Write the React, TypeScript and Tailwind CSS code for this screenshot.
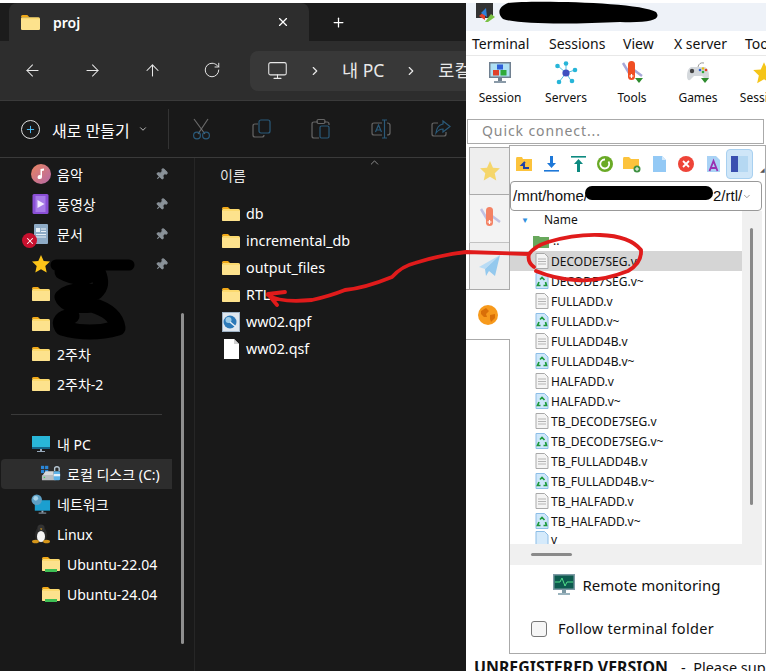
import React from 'react';
import { ArrowLeft, ArrowRight, ArrowUp, ChevronDown, ChevronRight, ChevronUp, Monitor, Pin, Plus, RotateCw, X } from 'lucide-react';

const Folder = ({ green = false, size = 18 }: { green?: boolean; size?: number }) => (
  <svg width={size} height={size} viewBox="0 0 18 18" className="shrink-0">
    <path d="M0 3.5 Q0 2 1.5 2 H6 L8 4 H0 Z" fill="#f0a818" />
    <path d="M0 5 Q0 3.8 1.5 4 L7 4 L8.5 4 H16.5 Q18 4 18 5.5 V15 Q18 16 16.5 16 H1.5 Q0 16 0 15 Z" fill="#fbd96e" />
    <path d="M0 6 H18 V15 Q18 16 16.5 16 H1.5 Q0 16 0 15 Z" fill="#fde28d" />
    {green && <rect x="3" y="14" width="12" height="3" fill="#3fbf55" />}
  </svg>
);

const Scissors = () => (
  <svg width="20" height="22" viewBox="0 0 20 22" fill="none" strokeWidth="1.2">
    <path d="M2 1 L13 16 M16 1 L6 16" stroke="#6a6a6a" />
    <circle cx="5" cy="17.5" r="3.4" stroke="#2a5a7a" />
    <circle cx="14" cy="17.5" r="3.4" stroke="#2a5a7a" />
  </svg>
);

const CopyIcon = () => (
  <svg width="20" height="20" viewBox="0 0 20 20" fill="none" strokeWidth="1.2">
    <path d="M6 5 H3 Q1 5 1 7 V16 Q1 18 3 18 H10 Q12 18 12 16" stroke="#666" />
    <rect x="7" y="1" width="11" height="13" rx="2" stroke="#2a5a7a" />
  </svg>
);

const PasteIcon = () => (
  <svg width="20" height="22" viewBox="0 0 20 22" fill="none" strokeWidth="1.2">
    <path d="M7 4 H3 Q1 4 1 6 V18 Q1 20 3 20 H8 M13 4 H16 Q18 4 18 6 V7" stroke="#666" />
    <rect x="6" y="1.5" width="8" height="4" rx="1.5" stroke="#666" />
    <rect x="9" y="8" width="9" height="12" rx="1.5" stroke="#2a5a7a" />
  </svg>
);

const RenameIcon = () => (
  <svg width="20" height="20" viewBox="0 0 20 20" fill="none" strokeWidth="1.2">
    <path d="M11 4 H3 Q1 4 1 6 V14 Q1 16 3 16 H11 M16 4 Q19 4 19 6 V14 Q19 16 16 16" stroke="#666" />
    <path d="M11 1 H16 M13.5 1 V19 M11 19 H16 M4.5 13 L7.5 6 L10.5 13 M5.5 11 H9.5" stroke="#2a5a7a" />
  </svg>
);

const ShareIcon = () => (
  <svg width="20" height="20" viewBox="0 0 20 20" fill="none" strokeWidth="1.2">
    <path d="M7 4 H3 Q1 4 1 6 V15 Q1 17 3 17 H13 Q15 17 15 15 V13" stroke="#666" />
    <path d="M12 2 L19 7.5 L12 13 V10 Q8 10 5 14 Q6 6 12 5 Z" stroke="#2a5a7a" />
  </svg>
);

const PinIcon = () => (
  <Pin size={13} className="rotate-45 text-[#8a9299] fill-[#8a9299] shrink-0" />
);

const Music = () => (
  <svg width="20" height="20" viewBox="0 0 20 20">
    <defs>
      <linearGradient id="mus" x1="0" y1="0" x2="1" y2="1">
        <stop offset="0" stopColor="#ea8560" />
        <stop offset="1" stopColor="#b469a8" />
      </linearGradient>
    </defs>
    <circle cx="10" cy="10" r="10" fill="url(#mus)" />
    <path d="M9.5 5 L13 4.5 V6.5 L11 7 V13 A2.2 2 0 1 1 9.5 11.2 Z" fill="#fff" />
  </svg>
);

const Video = () => (
  <svg width="20" height="20" viewBox="0 0 20 20">
    <rect x="1.5" y="0" width="16" height="20" rx="1.5" fill="#8a4fd6" />
    <rect x="4.5" y="2" width="10" height="16" fill="#a77ae8" />
    <path d="M6.5 6 L13.5 10 L6.5 14 Z" fill="#f2eaff" />
  </svg>
);

const Doc = () => (
  <svg width="20" height="20" viewBox="0 0 20 20">
    <rect x="3" y="0" width="14" height="20" rx="1" fill="#8eabc6" />
    <rect x="5" y="4" width="4" height="4" fill="#e8f0f7" />
    <path d="M10 5 H15 M10 7.5 H15 M5 10.5 H15 M5 13 H15" stroke="#e8f0f7" strokeWidth="1" />
  </svg>
);

const Star = ({ size = 20, color = '#fcc419' }: { size?: number; color?: string }) => (
  <svg width={size} height={size} viewBox="0 0 20 20">
    <path d="M10 1 L12.7 7 L19 7.6 L14.3 12 L15.7 18.6 L10 15.2 L4.3 18.6 L5.7 12 L1 7.6 L7.3 7 Z" fill={color} />
  </svg>
);

const Pc = () => (
  <svg width="20" height="20" viewBox="0 0 20 20">
    <rect x="1" y="2" width="18" height="13" fill="#29b6d8" />
    <rect x="1" y="13" width="18" height="2" fill="#15658a" />
    <rect x="9" y="15" width="2" height="2" fill="#9ab" />
    <rect x="6" y="17" width="8" height="1" fill="#9ab" />
  </svg>
);

const LocalDisk = () => (
  <svg width="22" height="18" viewBox="0 0 22 18">
    <rect x="0" y="0" width="3.5" height="3.5" fill="#2a86d8" />
    <rect x="4.5" y="0" width="3.5" height="3.5" fill="#2a86d8" />
    <rect x="0" y="4.5" width="3.5" height="3.5" fill="#2a86d8" />
    <rect x="4.5" y="4.5" width="3.5" height="3.5" fill="#2a86d8" />
    <path d="M2 10 L5 6 H14 V10 Z" fill="#d5d8da" />
    <rect x="1" y="10" width="15" height="6" rx="1" fill="#b8bcbf" />
    <rect x="3" y="12" width="1.5" height="1.5" fill="#4ccf60" />
    <path d="M15 6 V3 Q15 1 17.5 1 Q20 1 20 3 V6" stroke="#b8c8d4" strokeWidth="1.5" fill="none" />
    <rect x="14" y="6" width="7" height="10" rx="1.5" fill="#5db2e8" />
    <rect x="14" y="9" width="7" height="2.5" fill="#e3f1fb" />
  </svg>
);

const Network = () => (
  <svg width="21" height="21" viewBox="0 0 21 21">
    <rect x="4" y="6" width="16" height="11" fill="#1b9fd0" />
    <rect x="11" y="17" width="2" height="2" fill="#9ab" />
    <rect x="8" y="19" width="8" height="1" fill="#9ab" />
    <circle cx="6" cy="5.5" r="5.5" fill="#5d9fc4" />
    <circle cx="5" cy="4" r="2.5" fill="#a8d4ea" />
  </svg>
);

const Tux = () => (
  <svg width="18" height="20" viewBox="0 0 18 20">
    <ellipse cx="9" cy="11" rx="6" ry="8" fill="#2a2a2a" />
    <circle cx="9" cy="4" r="3.6" fill="#333" />
    <ellipse cx="9" cy="12.5" rx="4" ry="5.5" fill="#f5f5f5" />
    <path d="M8 4.6 H10.4 L9.2 6 Z" fill="#eaa81b" />
    <ellipse cx="3.5" cy="17.5" rx="3.5" ry="1.8" fill="#d4951a" />
    <ellipse cx="14.5" cy="17.5" rx="3.5" ry="1.8" fill="#d4951a" />
  </svg>
);

const QpfIcon = () => (
  <svg width="18" height="20" viewBox="0 0 18 20">
    <rect x="0.5" y="0.5" width="17" height="19" fill="#dfe7ef" stroke="#9fb3c6" />
    <circle cx="8" cy="10" r="6.5" fill="#2c79b8" />
    <circle cx="6.5" cy="8" r="3" fill="#9ccbe8" />
    <path d="M8 10 L14 15" stroke="#e8f0f8" strokeWidth="1.5" />
  </svg>
);

const QsfIcon = () => (
  <svg width="16" height="20" viewBox="0 0 16 20">
    <path d="M1 0 H11 L16 5 V20 H1 Z" fill="#fff" />
    <path d="M11 0 V5 H16 Z" fill="#d0d0d0" />
  </svg>
);

const SessionIcon = () => (
  <svg width="24" height="24" viewBox="0 0 24 24">
    <rect x="1" y="1" width="22" height="16" fill="#708090" />
    <rect x="2.5" y="2.5" width="19" height="13" fill="#aee0f4" />
    <rect x="9" y="3.5" width="6" height="5" fill="#2f5fd8" />
    <rect x="5" y="9" width="6" height="5.5" fill="#e0402a" />
    <rect x="12.5" y="9" width="6" height="5.5" fill="#2faa3a" />
    <rect x="10" y="17" width="4" height="3" fill="#708090" />
    <rect x="6" y="20" width="12" height="2" fill="#8a9aa8" />
  </svg>
);

const ServersIcon = () => (
  <svg width="24" height="24" viewBox="0 0 24 24" fill="#27b5d8">
    <path d="M12 12 L3 4 M12 12 L12 2 M12 12 L21 9 M12 12 L18 21 M12 12 L5 21" stroke="#27b5d8" strokeWidth="0.8" />
    <circle cx="3.5" cy="5" r="2.3" />
    <circle cx="12" cy="2.5" r="2.3" />
    <circle cx="21" cy="9" r="2.3" />
    <circle cx="18" cy="20" r="2.3" />
    <circle cx="5" cy="21" r="2.3" />
    <circle cx="12" cy="12" r="3.6" fill="#4050c0" />
  </svg>
);

const KnifeIcon = ({ arrow = true }: { arrow?: boolean }) => (
  <svg width="24" height="24" viewBox="0 0 24 24">
    <path d="M3 2 L12 17 M22 15 L14 9" stroke="#a8a8d8" strokeWidth="2.5" />
    <rect x="8" y="0" width="7" height="19" rx="3.5" fill="#f04e23" />
    <path d="M11.5 13 V17 M9.5 15 H13.5" stroke="#fff" strokeWidth="1.2" />
    {arrow && <path d="M15 17 H23 L19 22 Z" fill="#2e8b2e" />}
  </svg>
);

const GamesIcon = () => (
  <svg width="24" height="24" viewBox="0 0 24 24">
    <path d="M12 6 Q13 1 18 2" stroke="#999" fill="none" />
    <path d="M5 6 H19 Q23 8 23 15 Q23 20 20 19 L16 15 H8 L4 19 Q1 20 1 15 Q1 8 5 6 Z" fill="#d4d8dc" />
    <circle cx="6" cy="10" r="2.2" fill="#444" />
    <circle cx="14" cy="9" r="1.3" fill="#2f5fd8" />
    <circle cx="17" cy="7.5" r="1.3" fill="#e8c010" />
    <circle cx="17" cy="11" r="1.3" fill="#2faa3a" />
    <circle cx="20" cy="9" r="1.3" fill="#e0402a" />
    <path d="M15 17 H23 L19 22 Z" fill="#2e8b2e" />
  </svg>
);

const Plane = () => (
  <svg width="22" height="22" viewBox="0 0 22 22">
    <path d="M21 0 L0 12 L6 14 Z" fill="#b9dcf5" />
    <path d="M21 0 L6 14 L7 21 L10 16 L16 21 Z" fill="#94c9ee" />
  </svg>
);

const Globe = () => (
  <svg width="20" height="20" viewBox="0 0 20 20">
    <circle cx="10" cy="10" r="10" fill="#f79a1c" />
    <path d="M3 6 L8 3 L11 6 L8 9 L9 12 L6 12 L3 9 Z M12 10 L17 9 L17 13 L13 17 L12 14 Z" fill="#d96f08" />
  </svg>
);

const SmallIcon = ({ children }: { children: React.ReactNode }) => (
  <svg width="18" height="18" viewBox="0 0 18 18" className="shrink-0">{children}</svg>
);

const sftpTools = [
  <SmallIcon key="a"><path d="M1 4 Q1 2 2 2 H7 L8 4 H17 V16 H1 Z" fill="#fcc33c" /><path d="M10 7 L7 10 H9 V13 H14" stroke="#1e3fa8" strokeWidth="2" fill="none" /></SmallIcon>,
  <SmallIcon key="b"><path d="M8 1 H11 V8 H14 L9.5 13 L5 8 H8 Z" fill="#1e78d8" /><rect x="2" y="15" width="15" height="1.6" fill="#1e78d8" /></SmallIcon>,
  <SmallIcon key="c"><rect x="2" y="1" width="15" height="1.6" fill="#0d8a80" /><path d="M9.5 4 L14 9 H11 V17 H8 V9 H5 Z" fill="#0d8a80" /></SmallIcon>,
  <SmallIcon key="d"><circle cx="9" cy="9" r="8" fill="#6aaa26" /><path d="M12.5 6.5 A4.5 4.5 0 1 1 9 4.5" stroke="#fff" strokeWidth="1.8" fill="none" /></SmallIcon>,
  <SmallIcon key="e"><path d="M0 4 Q0 2 1 2 H6 L8 4 H16 V14 H0 Z" fill="#fcc33c" /><circle cx="14" cy="14" r="3.5" fill="#3f9142" /><path d="M14 12 V16 M12 14 H16" stroke="#fff" /></SmallIcon>,
  <SmallIcon key="f"><path d="M3 1 H12 L16 5 V17 H3 Z" fill="#93c9f5" /><path d="M12 1 V5 H16 Z" fill="#d5eafb" /></SmallIcon>,
  <SmallIcon key="g"><circle cx="9" cy="9" r="8" fill="#ee4438" /><path d="M6 6 L12 12 M12 6 L6 12" stroke="#fff" strokeWidth="1.8" /></SmallIcon>,
  <SmallIcon key="h"><path d="M3 1 H12 L16 5 V17 H3 Z" fill="#a9d2f5" /><path d="M5.5 16 L9.5 6 L13.5 16 M7 13 H12" stroke="#9a2fb0" strokeWidth="1.8" fill="none" /></SmallIcon>,
];

const NavRow = ({ icon, label, pinned, sub }: { icon: React.ReactNode; label?: string; pinned?: boolean; sub?: boolean }) => (
  <div className={`relative flex h-[30px] items-center ${sub ? 'pl-[41px]' : 'pl-[31px]'}`}>
    <span className="flex w-5 justify-center">{icon}</span>
    <span className="ml-[6px] whitespace-nowrap text-[14px] text-white">{label}</span>
    {pinned && <span className="absolute left-[155px]"><PinIcon /></span>}
  </div>
);

const FileRow = ({ icon, label }: { icon: React.ReactNode; label: string }) => (
  <div className="flex h-[27px] items-center pl-[27px]">
    <span className="flex w-[18px] justify-center">{icon}</span>
    <span className="ml-[6px] text-[14.3px] text-white">{label}</span>
  </div>
);

const TextFile = () => (
  <svg width="14" height="16" viewBox="0 0 14 16" className="shrink-0">
    <path d="M1 .5 H9.5 L13 4 V15.5 H1 Z" fill="#f4f4f4" stroke="#a9a9a9" />
    <path d="M3 6 H11 M3 8.5 H11 M3 11 H11" stroke="#b4b4b4" />
  </svg>
);

const BackupFile = () => (
  <svg width="14" height="16" viewBox="0 0 14 16" className="shrink-0">
    <path d="M1 .5 H9.5 L13 4 V15.5 H1 Z" fill="#cfe7fb" stroke="#8cbde6" />
    <path d="M5 6.5 L7 4.5 L9.5 7 M10.5 9 L11.5 12.5 H8.5 M5.5 12.5 H2.5 L4 9" stroke="#1f9a3d" strokeWidth="1.7" fill="none" />
  </svg>
);

const remoteFiles: [string, boolean][] = [
  ['DECODE7SEG.v', false],
  ['DECODE7SEG.v~', true],
  ['FULLADD.v', false],
  ['FULLADD.v~', true],
  ['FULLADD4B.v', false],
  ['FULLADD4B.v~', true],
  ['HALFADD.v', false],
  ['HALFADD.v~', true],
  ['TB_DECODE7SEG.v', false],
  ['TB_DECODE7SEG.v~', true],
  ['TB_FULLADD4B.v', false],
  ['TB_FULLADD4B.v~', true],
  ['TB_HALFADD.v', false],
  ['TB_HALFADD.v~', true],
];

const Explorer = () => (
  <div className="flex h-full w-[466px] shrink-0 flex-col bg-[#191919] font-['Noto_Sans','Noto_Sans_CJK_KR',sans-serif]">
    <div className="h-[3px] bg-white" />
    <div className="flex h-[38px] items-end bg-[#1c1c1c] pl-[9px]">
      <div className="flex h-[38px] w-[300px] items-center rounded-t-lg bg-[#2d2d2d] pl-3 pr-[19px]">
        <Folder size={19} />
        <span className="ml-[13px] text-[14px] font-semibold text-white">proj</span>
        <X size={14} className="ml-auto text-white" />
      </div>
      <Plus size={15} className="mb-[11px] ml-[22px] text-white" />
    </div>
    <div className="flex h-[60px] items-center border-b border-[#3a3a3a] bg-[#2d2d2d] pl-[23px]">
      <div className="flex w-[227px] text-[#e8e8e8]">
        <span className="w-[60px]"><ArrowLeft size={19} strokeWidth={1.3} /></span>
        <span className="w-[60px]"><ArrowRight size={19} strokeWidth={1.3} /></span>
        <span className="w-[60px]"><ArrowUp size={19} strokeWidth={1.3} /></span>
        <span className="w-[47px]"><RotateCw size={18} strokeWidth={1.3} /></span>
      </div>
      <div className="flex h-10 flex-1 items-center rounded-l-lg bg-[#383838] pl-[17px] text-[17.5px] text-[#e8e8e8]">
        <Monitor size={21} strokeWidth={1.2} />
        <ChevronRight size={14} strokeWidth={2} className="ml-[20px]" />
        <span className="ml-[20px] whitespace-nowrap">내 PC</span>
        <ChevronRight size={14} strokeWidth={2} className="ml-[20px]" />
        <span className="ml-[20px] whitespace-nowrap">로컬</span>
      </div>
    </div>
    <div className="flex h-[57px] items-center border-b border-[#3a3a3a] pl-[21px]">
      <span className="flex size-[19px] items-center justify-center rounded-full border border-[#e0e0e0]">
        <Plus size={11} className="text-[#4cc2ff]" />
      </span>
      <span className="ml-3 whitespace-nowrap pt-[3px] text-[16px] text-white">새로 만들기</span>
      <ChevronDown size={10} className="ml-2 text-[#d8d8d8]" />
      <span className="ml-5 h-10 w-px bg-[#333]" />
      <div className="flex items-center pl-[23px]">
        <span className="w-[60px]"><Scissors /></span>
        <span className="w-[59px]"><CopyIcon /></span>
        <span className="w-[60px]"><PasteIcon /></span>
        <span className="w-[60px]"><RenameIcon /></span>
        <span><ShareIcon /></span>
      </div>
    </div>
    <div className="flex min-h-0 flex-1">
      <div className="flex w-[195px] shrink-0 border-r border-[#262626]">
        <div className="w-[172px] shrink-0 overflow-hidden pt-px">
          <NavRow icon={<Music />} label="음악" pinned />
          <NavRow icon={<Video />} label="동영상" pinned />
          <div className="relative">
            <NavRow icon={<Doc />} label="문서" pinned />
            <span className="absolute left-[22px] top-[14px] flex size-[15px] items-center justify-center rounded-full bg-[#c8102e]">
              <X size={10} strokeWidth={2.5} className="text-white" />
            </span>
          </div>
          <NavRow icon={<Star />} pinned />
          <NavRow icon={<Folder />} />
          <NavRow icon={<Folder />} />
          <NavRow icon={<Folder />} label="2주차" />
          <NavRow icon={<Folder />} label="2주차-2" />
          <div className="flex h-[30px] items-center pl-[11px] pr-[10px]">
            <div className="h-px w-full bg-[#3a3a3a]" />
          </div>
          <NavRow icon={<Pc />} label="내 PC" />
          <div className="ml-px rounded-l bg-[#2d2d2d]">
            <div className="-ml-px">
              <NavRow sub icon={<LocalDisk />} label="로컬 디스크 (C:)" />
            </div>
          </div>
          <NavRow icon={<Network />} label="네트워크" />
          <NavRow icon={<Tux />} label="Linux" />
          <NavRow sub icon={<Folder green />} label="Ubuntu-22.04" />
          <NavRow sub icon={<Folder green />} label="Ubuntu-24.04" />
        </div>
        <div className="ml-[9px] mt-[155px] h-[331px] w-[3px] rounded bg-[#8f8f8f]" />
      </div>
      <div className="min-w-0 flex-1">
        <div className="relative flex h-[42px] items-start pl-[25px] pt-[7px] text-[14px] text-[#e6e6e6]">
          이름
          <ChevronUp size={13} strokeWidth={1.3} className="absolute left-[173px] top-[-2px] text-[#bbb]" />
        </div>
        <FileRow icon={<Folder />} label="db" />
        <FileRow icon={<Folder />} label="incremental_db" />
        <FileRow icon={<Folder />} label="output_files" />
        <FileRow icon={<Folder />} label="RTL" />
        <FileRow icon={<QpfIcon />} label="ww02.qpf" />
        <FileRow icon={<QsfIcon />} label="ww02.qsf" />
      </div>
    </div>
  </div>
);

const Terminal = () => (
  <div className="flex h-full min-w-0 flex-1 flex-col overflow-hidden bg-white font-['Noto_Sans',sans-serif] text-[#111]">
    <div className="flex h-[31px] shrink-0 items-start bg-white">
      <div className="mt-[3px] flex h-[28px] w-full items-start bg-[#eef2f8] pl-[10px]">
        <svg width="19" height="19" viewBox="0 0 19 19">
          <rect x="0" y="0" width="17" height="15" fill="#333" />
          <path d="M9 8 L3 13 L9 17 Z" fill="#e0402a" />
          <path d="M10 5 L5 10 L11 14 Z" fill="#2f7fd8" />
          <path d="M9 19 L15 11 L19 14 L12 19 Z" fill="#7ac143" />
        </svg>
      </div>
    </div>
    <div className="flex h-[25px] shrink-0 items-center border-b border-[#e8e8e8] pl-[6px] text-[14px]">
      <span className="w-[77px] shrink-0">Terminal</span>
      <span className="w-[74px] shrink-0">Sessions</span>
      <span className="w-[51px] shrink-0">View</span>
      <span className="w-[71px] shrink-0 whitespace-nowrap">X server</span>
      <span className="shrink-0">Tools</span>
    </div>
    <div className="flex h-[63px] shrink-0 pl-[1px] pt-[5px] text-[12px]">
      {[
        { label: 'Session', icon: <SessionIcon /> },
        { label: 'Servers', icon: <ServersIcon /> },
        { label: 'Tools', icon: <KnifeIcon /> },
        { label: 'Games', icon: <GamesIcon /> },
        { label: 'Sessions', icon: <Star size={24} color="#f5c518" /> },
      ].map((t) => (
        <div key={t.label} className="flex w-[66px] shrink-0 flex-col items-center gap-[5px]">
          {t.icon}
          <span className="whitespace-nowrap leading-[16px]">{t.label}</span>
        </div>
      ))}
    </div>
    <div className="mx-[1px] mr-[2px] flex h-[25px] shrink-0 items-center border border-[#aaa] pb-[3px] pl-[14px] text-[14px] tracking-[0.9px] text-[#888]">
      Quick connect...
    </div>
    <div className="flex min-h-0 flex-1 pt-px">
      <div className="flex w-[44px] shrink-0 flex-col pl-[3px] pt-[2px]">
        <div className="flex h-[48px] w-[40px] items-center justify-center border border-[#aaa] border-r-0 bg-[#eee]"><Star size={22} color="#f5d66b" /></div>
        <div className="flex h-[48px] w-[40px] items-center justify-center border-b border-l border-[#aaa] bg-[#eee] opacity-70"><KnifeIcon arrow={false} /></div>
        <div className="flex h-[46px] w-[40px] items-center justify-center border-l border-[#aaa] bg-[#eee]"><Plane /></div>
        <div className="relative z-10 -ml-[3px] flex h-[51px] w-[44px] items-center justify-center border-y border-[#aaa] bg-white"><Globe /></div>
      </div>
      <div className="-ml-px flex h-[509px] min-w-0 flex-1 flex-col border border-[#aaa]">
        <div className="flex h-[35px] shrink-0 items-center gap-[9px] pl-[5px]">
          {sftpTools}
          <span className="-ml-[5px] flex h-[30px] w-[27px] items-center justify-center rounded-sm border border-[#a8d0f0] bg-[#cfe6f8]">
            <span className="flex h-4 w-[17px]">
              <span className="h-4 w-[7px] bg-[#3a4fb0]" />
              <span className="h-4 w-[10px] bg-[#b5d8f2]" />
            </span>
          </span>
          <span className="-ml-[2px] mt-[14px] text-[6px] text-[#555]">◢</span>
        </div>
        <div className="mr-[3px] flex h-[30px] shrink-0 items-center rounded-sm border border-[#999] pl-[2px] pr-[9px] font-['Liberation_Sans',sans-serif] text-[15px]">
          <span className="whitespace-nowrap">/mnt/home/</span>
          <span className="ml-[125px]">2/rtl/</span>
          <ChevronDown size={13} strokeWidth={1.4} className="ml-auto text-[#555]" />
        </div>
        <div className="mr-[3px] flex min-h-0 flex-1">
          <div className="min-w-0 flex-1 overflow-hidden">
            <div className="mb-[4px] flex h-[16px] items-center pl-[11px] pt-px text-[12px]">
              <span className="text-[8px] text-[#3090e0]">▼</span>
              <span className="ml-[15px]">Name</span>
            </div>
            <div className="flex h-[20px] items-center pl-[23px] text-[12px]">
              <svg width="16" height="14" viewBox="0 0 16 14"><path d="M0 2 H6 L7 3 H16 V14 H0 Z" fill="#68a85c" /></svg>
              <span className="ml-[4px] leading-none">..</span>
            </div>
            {remoteFiles.map(([name, backup], i) => (
              <div key={name} className={`flex h-[20px] items-center pl-[25px] text-[12px] ${i === 0 ? 'bg-[#d5d5d5]' : ''}`}>
                {backup ? <BackupFile /> : <TextFile />}
                <span className="ml-[2px] whitespace-nowrap pt-px">{name}</span>
              </div>
            ))}
            <div className="flex h-[20px] items-start pl-[25px] text-[12px]">
              <svg width="14" height="16" viewBox="0 0 14 16" className="shrink-0"><path d="M1 .5 H9.5 L13 4 V15.5 H1 Z" fill="#d5eafb" stroke="#8cbde6" /></svg>
              <span className="ml-[2px]">v</span>
            </div>
          </div>
          <div className="w-[20px] shrink-0 bg-[#f0f0f0] pl-[8px] pt-[17px]">
            <div className="h-[277px] w-[3px] rounded bg-[#8a8a8a]" />
          </div>
        </div>
        <div className="mr-[3px] flex h-[21px] shrink-0 items-center bg-[#f0f0f0] pl-[21px]">
          <div className="h-[3px] w-[41px] rounded bg-[#8a8a8a]" />
        </div>
        <div className="flex h-[40px] shrink-0 items-center justify-center pr-[2px] text-[15px]">
          <svg width="22" height="22" viewBox="0 0 22 22" className="mr-2">
            <rect x="0" y="0" width="22" height="16" fill="#7d9aa5" />
            <rect x="1.5" y="1.5" width="19" height="13" fill="#0d5a4e" />
            <path d="M2 8 H7 L9 4 L12 12 L14 8 H20" stroke="#52e08a" fill="none" />
            <rect x="9" y="16" width="4" height="3" fill="#7d9aa5" />
            <rect x="5" y="19" width="12" height="2" fill="#9ab3bd" />
          </svg>
          Remote monitoring
        </div>
        <div className="flex h-[48px] shrink-0 items-center pl-[21px] text-[14.5px] tracking-[0.3px]">
          <span className="h-4 w-4 rounded-[3px] border border-[#777] bg-[#f6f6f6]" />
          <span className="ml-[11px] whitespace-nowrap">Follow terminal folder</span>
        </div>
      </div>
    </div>
    <div className="flex h-[17px] shrink-0 items-start whitespace-nowrap pl-[8px] leading-[26px]">
      <span className="text-[15.9px] font-bold">UNREGISTERED VERSION</span>
      <span className="ml-[13px] text-[14.5px]">-&nbsp;&nbsp;Please support</span>
    </div>
  </div>
);

// red annotation and the black redactions sit on top of both windows
const Annotations = () => (
  <svg className="pointer-events-none absolute inset-0 z-20" width="766" height="671" viewBox="0 0 766 671" fill="none" strokeLinecap="round" strokeLinejoin="round">
    <path d="M508 3 C 530 0, 640 2, 656 12 C 662 20, 650 23, 620 22 C 580 24, 520 25, 503 19 C 496 12, 500 6, 508 3 Z" fill="#000" />
    <path d="M592 193 H706" stroke="#000" strokeWidth="14" />
    <path d="M56 265 H129" stroke="#000" strokeWidth="11" />
    <path d="M62 272 Q80 282 98 272 Q104 285 96 292 Q70 288 62 297 Q66 308 92 305 Q116 312 118 328 Q90 336 62 328 Q56 318 72 316" stroke="#000" strokeWidth="15" />
    <path d="M285 292 L268 294 L277 305 M268 295 Q280 303 312 300 Q330 296 345 290 Q365 288 392 277 Q402 266 415 263 Q440 255 466 252 L529 254 Q535 246 548 242 Q575 234 600 235 Q630 236 641 250 Q642 263 628 271 Q600 282 576 280 Q555 279 536 271 M529 254 Q527 262 534 267" stroke="#e01b1b" strokeWidth="3.8" />
  </svg>
);

const App: React.FC = () => (
  <div className="relative flex h-[671px] w-[766px] overflow-hidden bg-white">
    <Explorer />
    <Terminal />
    <Annotations />
  </div>
);

export default App;
